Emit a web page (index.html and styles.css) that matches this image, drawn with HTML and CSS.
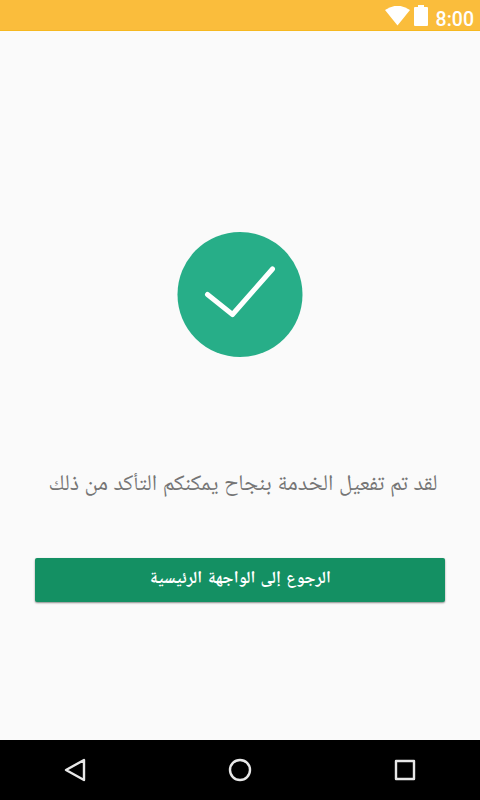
FILE: index.html
```
<!DOCTYPE html>
<html lang="ar">

<head>
    <meta charset="UTF-8">
    <meta name="viewport" content="width=device-width, initial-scale=1.0">
    <title>تفعيل الخدمة</title>
    <link rel="stylesheet" href="styles.css">
</head>

<body>
    <!-- Status bar -->
    <header class="status-bar">
        <svg class="wifi" width="25" height="20" viewBox="0 0 25 20">
            <path d="M0 4Q12.500 -4.500 25 4L12.500 19.500Z" fill="#fff" />
        </svg>
        <svg class="battery" width="14" height="21" viewBox="0 0 14 21">
            <path d="M4 0h6v2H13a1 1 0 0 1 1 1v17a1 1 0 0 1-1 1H1a1 1 0 0 1-1-1V3a1 1 0 0 1 1-1h3z" fill="#fff" />
        </svg>
        <span class="clock">8:00</span>
    </header>

    <main class="content" dir="rtl">
        <svg class="check" width="126" height="126" viewBox="0 0 126 126">
            <circle cx="63" cy="63.500" r="62.500" fill="#27ae88" />
            <path d="M30.500 63.500L55.500 83.500L95.500 38" fill="none" stroke="#fff" stroke-width="5" stroke-linecap="round" stroke-linejoin="round" />
        </svg>
        <p class="message">لقد تم تفعيل الخدمة بنجاح يمكنكم التأكد من ذلك</p>
        <button class="home-button">الرجوع إلى الواجهة الرئيسية</button>
    </main>

    <!-- Navigation bar -->
    <nav class="nav-bar">
        <svg width="24" height="24" viewBox="0 0 24 24"><path d="M21 2V22L3 12Z" /></svg>
        <svg width="24" height="24" viewBox="0 0 24 24"><circle cx="12" cy="12" r="10" /></svg>
        <svg width="24" height="24" viewBox="0 0 24 24"><path d="M3 3H21V21H3Z" /></svg>
    </nav>
</body>

</html>
```
FILE: styles.css
```
body {
    display: flex;
    flex-direction: column;
    height: 800px;
    margin: 0;
    background-color: #fafafa;
    font-family: Roboto, "Noto Naskh Arabic UI", "Noto Naskh Arabic", "Noto Sans Arabic", "DejaVu Sans", sans-serif;
}

.status-bar {
    display: flex;
    justify-content: flex-end;
    height: 31px;
    padding-right: 6px;
    box-sizing: border-box;
    background-color: #fabd3c;
    border-bottom: 1px solid #f6b820;
}

.wifi {
    margin: 6px 4px 0 0;
}

.battery {
    margin: 5px 8px 0 0;
}

.clock {
    color: #fff;
    font-size: 19.5px;
    font-weight: 500;
    line-height: 39px;
}

.content {
    display: flex;
    flex: 1;
    flex-direction: column;
    align-items: center;
}

.check {
    margin-top: 200px;
}

.message {
    margin: 108px 0 0;
    padding-left: 6px;
    color: #757575;
    font-size: 22.4px;
    line-height: 40px;
    white-space: nowrap;
}

.home-button {
    width: 410px;
    height: 44px;
    margin-top: 53px;
    padding: 0 0 3px;
    border: none;
    border-radius: 2px;
    background-color: #149063;
    box-shadow: 0 1px 2px rgba(0, 0, 0, 0.45);
    color: #fff;
    font-family: inherit;
    font-size: 17px;
    font-weight: bold;
    word-spacing: 1px;
}

.nav-bar {
    display: flex;
    justify-content: space-between;
    align-items: center;
    height: 60px;
    padding: 0 63px;
    background-color: #000;
}

.nav-bar svg {
    fill: none;
    stroke: #e8e8e8;
    stroke-width: 2.4;
    stroke-linejoin: round;
}
```
